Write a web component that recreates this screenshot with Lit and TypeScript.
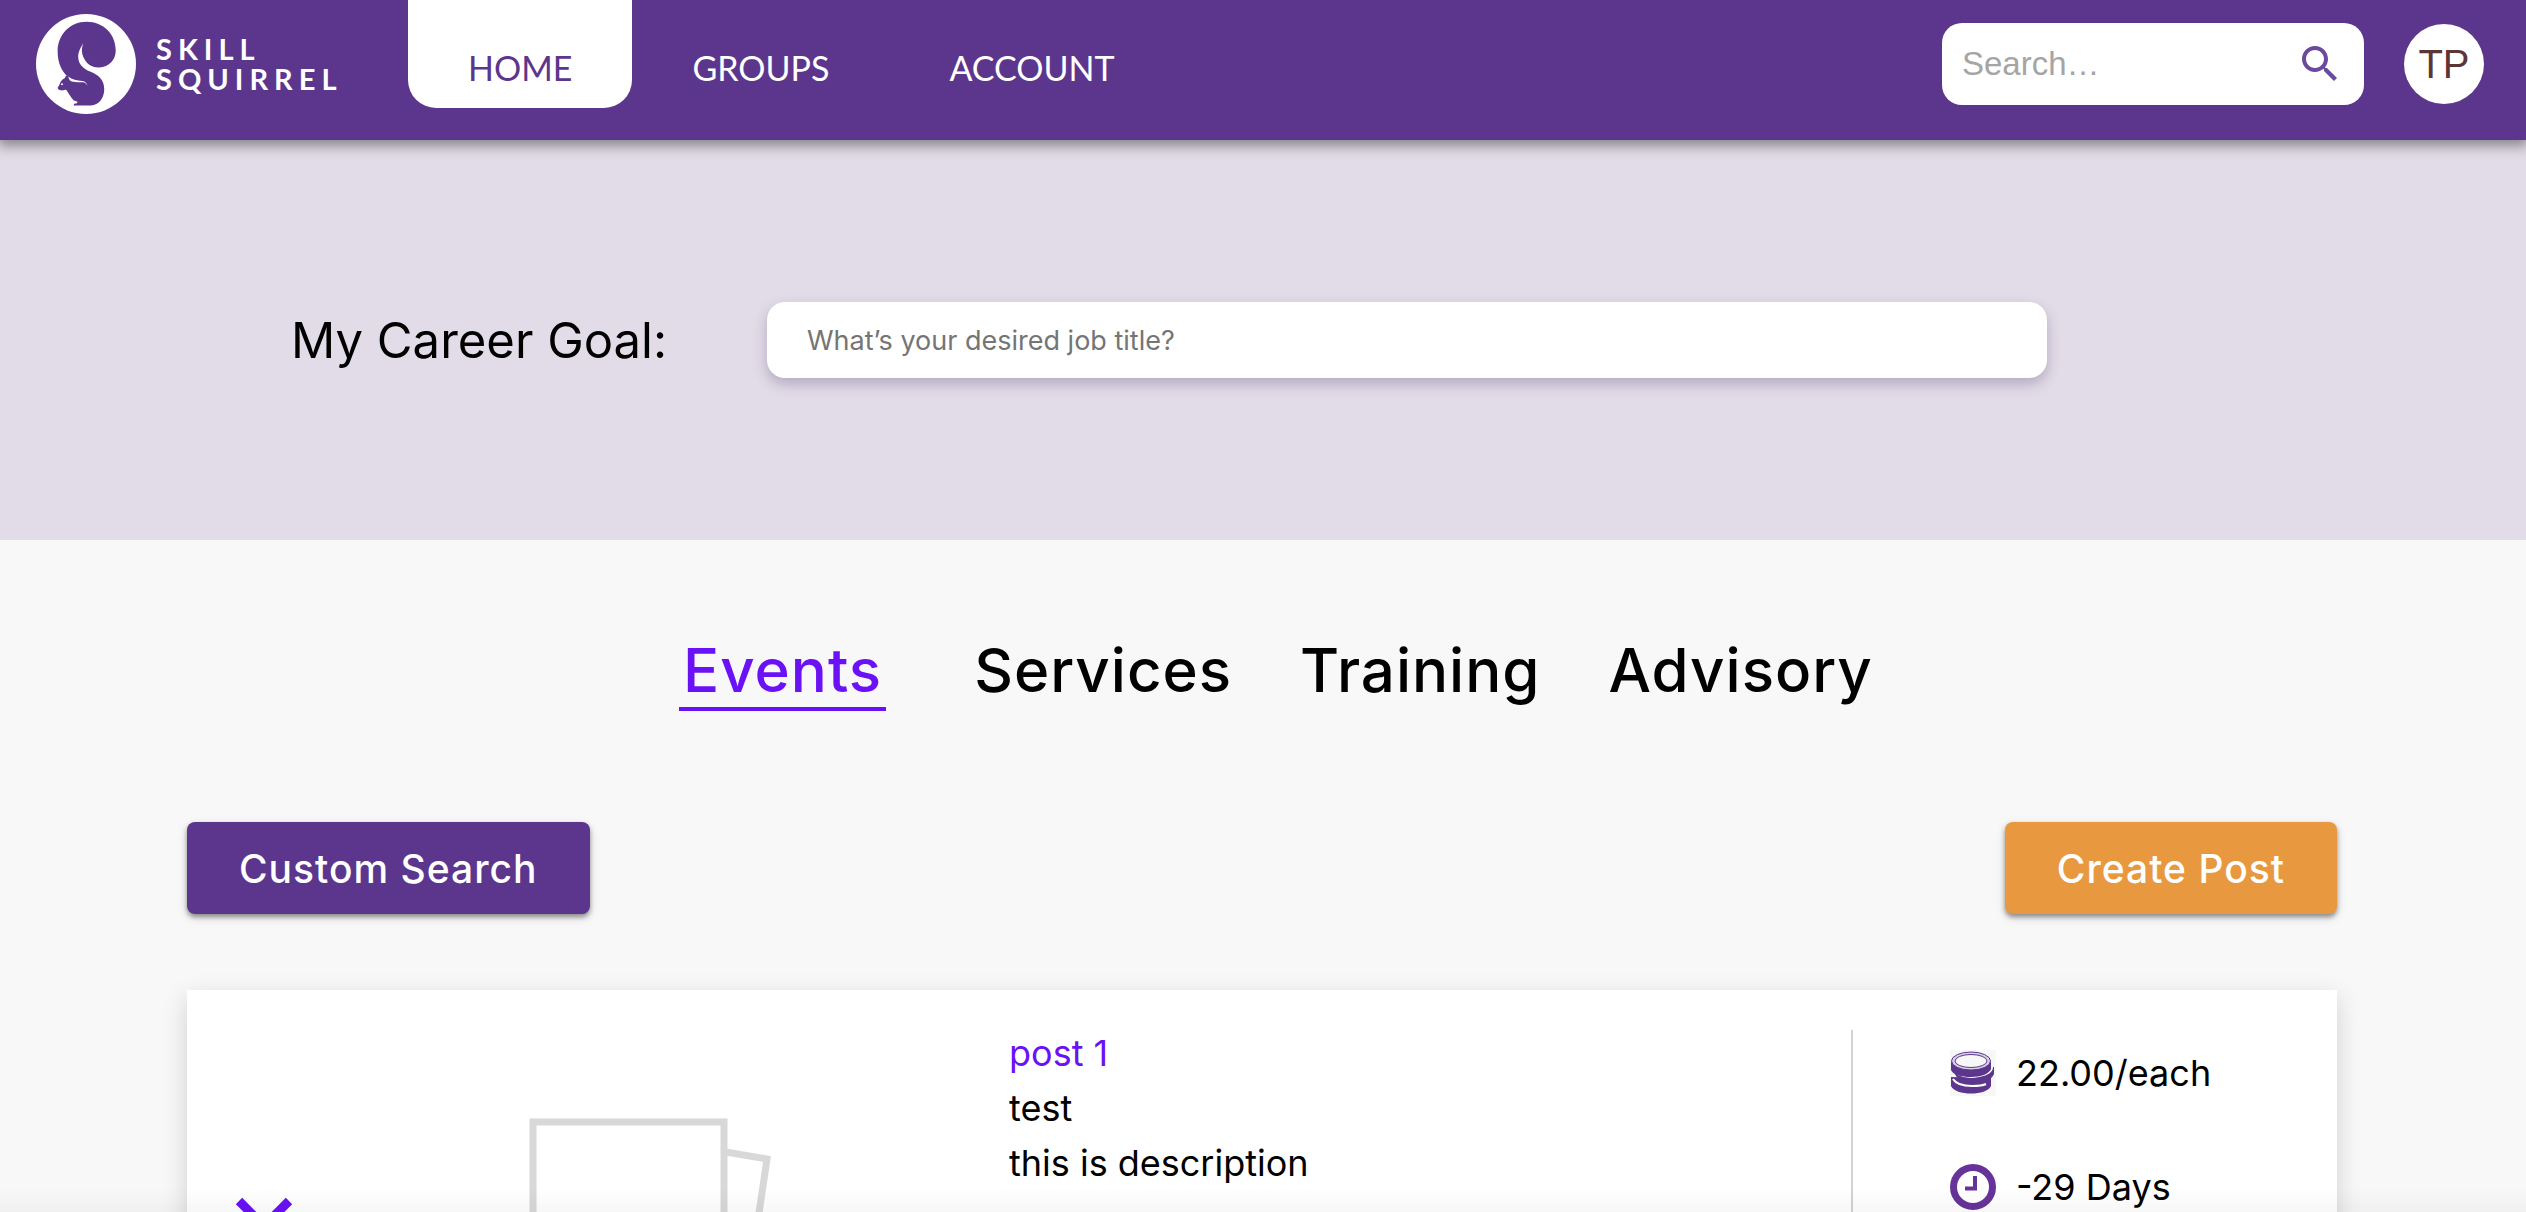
import { LitElement, html, css, svg } from "lit";
import { customElement, property, state } from "lit/decorators.js";
import { classMap } from "lit/directives/class-map.js";

const logoMark = svg`
  <circle cx="166" cy="168" r="148" fill="#fff"></circle>
  <path fill="#5c368d" d="M205 178C235 177 254 155 254 128C254 80 218 43 168 43C118 43 82 82 82 130
    C82 164 94 190 112 205L107 202L103 210C95 213 90 220 87 230L82 238C83 244 90 247 98 246
    C102 246 105 242 108 245C115 256 122 268 130 276L141 280L139 284L131 286L129 291H180
    C205 291 220 268 220 243C220 214 202 200 180 191C158 182 143 168 143 147C143 130 152 117 158 106
    C151 126 153 141 163 156C172 171 187 179 205 178Z"></path>
  <path fill="#fff" d="M113 205C116 211 116 217 124 220C138 223 150 221 158 222C164 224 168 227 170 233
    C170 226 164 219 155 218C139 217 125 214 113 205Z"></path>
  <circle cx="95" cy="228" r="3" fill="#fff"></circle>
`;

@customElement("skill-header")
class SkillHeader extends LitElement {
  @state() private current = "HOME";

  static styles = css`
    :host {
      display: block;
      position: relative;
      z-index: 2;
      flex: none;
    }
    .bar {
      display: flex;
      align-items: flex-start;
      height: 140px;
      padding: 0 42px 0 36px;
      box-sizing: border-box;
      background: #5c368d;
      box-shadow: 0 4px 12px 2px rgba(0, 0, 0, 0.4);
      font-family: Lato, "Liberation Sans", sans-serif;
    }
    .brand {
      display: flex;
      align-items: center;
      gap: 20px;
      width: 372px;
      height: 128px;
      color: #fff;
      text-decoration: none;
    }
    .mark {
      width: 100px;
      height: 100px;
    }
    .word {
      font-size: 29px;
      line-height: 30px;
      font-weight: 700;
      letter-spacing: 6px;
    }
    .nav {
      display: flex;
      flex: 1;
    }
    .link {
      height: 108px;
      padding: 28px 60px 0;
      box-sizing: border-box;
      border-radius: 0 0 28px 28px;
      color: #fff;
      font-size: 34px;
      line-height: 80px;
      text-decoration: none;
    }
    .link.on {
      background: #fff;
      color: #5c368d;
    }
    .search {
      display: flex;
      align-items: center;
      width: 422px;
      height: 82px;
      margin: 23px 40px 0 0;
      padding: 0 20px;
      box-sizing: border-box;
      border-radius: 20px;
      background: #fff;
    }
    .search input {
      flex: 1;
      min-width: 0;
      padding: 0;
      border: 0;
      outline: 0;
      background: none;
      font: 33px "Liberation Sans", sans-serif;
      color: #333;
    }
    .search input::placeholder {
      color: #a5a5a5;
      opacity: 1;
    }
    .go {
      display: flex;
      padding: 0;
      border: 0;
      background: none;
      cursor: pointer;
    }
    .go svg {
      width: 48px;
      height: 48px;
      fill: #6a4a9c;
    }
    .avatar {
      width: 80px;
      height: 80px;
      margin-top: 24px;
      padding: 0;
      border: 0;
      border-radius: 50%;
      background: #fff;
      color: #5d3535;
      font: 40px "Liberation Sans", sans-serif;
    }
  `;

  private pick(e: Event, name: string) {
    e.preventDefault();
    this.current = name;
  }

  render() {
    return html`
      <header class="bar">
        <a class="brand" href="#home">
          <svg class="mark" viewBox="18 20 296 296" aria-hidden="true">${logoMark}</svg>
          <span class="word">SKILL<br />SQUIRREL</span>
        </a>
        <nav class="nav">
          ${["HOME", "GROUPS", "ACCOUNT"].map(
            (n) => html`<a
              class=${classMap({ link: true, on: n === this.current })}
              href="#${n.toLowerCase()}"
              @click=${(e: Event) => this.pick(e, n)}
              >${n}</a
            >`
          )}
        </nav>
        <form class="search" @submit=${(e: Event) => e.preventDefault()}>
          <input type="text" aria-label="Search" placeholder="Search…" />
          <button class="go" aria-label="Search">
            <svg viewBox="0 0 24 24">
              <path d="M15.5 14h-.79l-.28-.27C15.41 12.59 16 11.11 16 9.5 16 5.91 13.09 3 9.5 3S3 5.91 3 9.5 5.91 16 9.5 16c1.61 0 3.09-.59 4.23-1.57l.27.28v.79l5 4.99L20.49 19l-4.99-5zm-6 0C7.01 14 5 11.99 5 9.5S7.01 5 9.5 5 14 7.01 14 9.5 11.99 14 9.5 14z"></path>
            </svg>
          </button>
        </form>
        <button class="avatar">TP</button>
      </header>
    `;
  }
}

interface Post {
  title: string;
  type: string;
  description: string;
  price: string;
  days: string;
}

@customElement("post-card")
class PostCard extends LitElement {
  @property({ attribute: false }) post!: Post;

  static styles = css`
    :host {
      display: block;
    }
    .card {
      display: grid;
      grid-template-columns: 125px 697px minmax(0, 1fr) 486px;
      min-height: 464px;
      padding: 40px 0;
      box-sizing: border-box;
      background: #fff;
      box-shadow: 0 8px 24px rgba(0, 0, 0, 0.16);
      font-size: 36px;
    }
    .vote {
      display: flex;
      align-items: center;
      justify-content: flex-end;
      padding: 0;
      border: 0;
      background: none;
    }
    .vote svg {
      width: 96px;
      height: 96px;
      fill: none;
      stroke: #6a11f5;
      stroke-width: 9;
    }
    .thumb {
      display: flex;
      align-items: flex-start;
      justify-content: center;
      padding: 88px 18px 0 0;
    }
    .thumb svg {
      width: 245px;
      height: 248px;
      fill: #fff;
      stroke: #d8d8d8;
      stroke-width: 7;
    }
    .text {
      line-height: 55px;
    }
    .title {
      display: block;
      margin-top: -4px;
      color: #6a11f5;
      text-decoration: none;
    }
    .line {
      margin: 0;
    }
    .facts {
      display: flex;
      flex-direction: column;
      gap: 68px;
      margin: 0;
      padding: 20px 0 0 97px;
      border-left: 2px solid #d2d2d2;
      list-style: none;
    }
    .fact {
      display: flex;
      align-items: center;
      gap: 20px;
      height: 46px;
    }
    .fact svg {
      width: 46px;
      height: 46px;
    }
  `;

  render() {
    const p = this.post;
    return html`
      <article class="card">
        <button class="vote" aria-label="Expand post">
          <svg viewBox="0 0 96 96"><path d="M23 27l25 25 25-25"></path></svg>
        </button>
        <div class="thumb">
          <svg viewBox="0 0 245 248" aria-hidden="true">
            <path d="M150 26L238 41L210 230L120 214Z"></path>
            <rect x="4" y="4" width="191" height="230"></rect>
          </svg>
        </div>
        <div class="text">
          <a class="title" href="#post">${p.title}</a>
          <p class="line">${p.type}</p>
          <p class="line">${p.description}</p>
        </div>
        <ul class="facts">
          <li class="fact">
            <svg viewBox="0 0 46 46" aria-hidden="true">
              <rect width="46" height="46" fill="#f7f7f7"></rect>
              <path fill="#5c368d" d="M1 27v9c2 5 11 7.500 20 7.500s18-2.500 20-7.500v-8z"></path>
              <path fill="none" stroke="#fff" stroke-width="2" d="M3 29c3 5 10 7 19 7 7 0 12-1 14-2"></path>
              <path fill="#5c368d" d="M4 19c0 9 8 14 20 14s18-4 20-9v-7z"></path>
              <path fill="none" stroke="#fff" stroke-width="2" d="M8 24c6 3 14 3.500 21 2 8-1.500 13-5 13-9"></path>
              <path fill="#5c368d" d="M1 12v8c2 5 10 7 20 7s18-3 20-8v-7z"></path>
              <ellipse cx="21" cy="11" rx="19.500" ry="9" fill="#d9d0e6" stroke="#5c368d"></ellipse>
              <ellipse cx="21" cy="11" rx="16" ry="6.500" fill="#f7f7f7" stroke="#5c368d"></ellipse>
            </svg>
            <span>${p.price}</span>
          </li>
          <li class="fact">
            <svg viewBox="0 0 46 46" fill="none" stroke="#67339b" aria-hidden="true">
              <circle cx="23" cy="23" r="19.500" stroke-width="7"></circle>
              <path stroke-width="4" d="M25 12v12.500H15"></path>
            </svg>
            <span>${p.days}</span>
          </li>
        </ul>
      </article>
    `;
  }
}

@customElement("app-root")
class AppRoot extends LitElement {
  @state() private tab = "Events";

  private posts: Post[] = [
    { title: "post 1", type: "test", description: "this is description", price: "22.00/each", days: "-29 Days" },
  ];

  static styles = css`
    :host {
      display: flex;
      flex-direction: column;
      height: 100vh;
      overflow: hidden;
      background: #f8f8f8;
      color: #000;
      font-family: Inter, "Liberation Sans", sans-serif;
    }
    .scroll {
      flex: 1;
      min-height: 0;
      overflow-y: auto;
      scrollbar-width: none;
    }
    .goal {
      display: grid;
      grid-template-columns: 476px minmax(0, 1280px);
      align-items: center;
      height: 400px;
      padding: 0 291px;
      box-sizing: border-box;
      background: #e2dce8;
    }
    .goal label {
      font-size: 49px;
    }
    .goal input {
      height: 76px;
      padding: 0 40px;
      box-sizing: border-box;
      border: 0;
      outline: 0;
      border-radius: 18px;
      background: #fff;
      box-shadow: 0 6px 14px rgba(60, 40, 90, 0.28);
      font: 27px Inter, "Liberation Sans", sans-serif;
    }
    .goal input::placeholder {
      color: #757575;
      opacity: 1;
    }
    .tabs {
      display: flex;
      justify-content: center;
      gap: 60px;
      padding: 94px 0 111px 30px;
    }
    .tab {
      padding: 0 4px;
      height: 77px;
      border: 0;
      border-bottom: 4px solid transparent;
      background: none;
      color: #000;
      font: 500 60px/73px Inter, "Liberation Sans", sans-serif;
      letter-spacing: 1px;
      cursor: pointer;
    }
    .tab.on {
      margin-right: 24px;
      border-color: #6a11f5;
      color: #6a11f5;
    }
    .actions {
      display: flex;
      justify-content: space-between;
      padding: 0 189px 76px 187px;
    }
    .btn {
      height: 92px;
      padding: 0 52px;
      border: 0;
      border-radius: 8px;
      background: #5c368d;
      color: #fff;
      font: 500 39px Inter, "Liberation Sans", sans-serif;
      letter-spacing: 1px;
      box-shadow: 0 3px 5px rgba(0, 0, 0, 0.4), 0 4px 12px rgba(0, 0, 0, 0.1);
      cursor: pointer;
    }
    .btn.create {
      background: #e8993f;
    }
    .list {
      padding: 0 189px 76px 187px;
    }
    .fade {
      position: fixed;
      inset: auto 0 0 0;
      height: 24px;
      background: linear-gradient(transparent, rgba(0, 0, 0, 0.03));
      pointer-events: none;
    }
  `;

  render() {
    return html`
      <skill-header></skill-header>
      <main class="scroll">
        <section class="goal">
          <label for="goal">My Career Goal:</label>
          <input id="goal" type="text" placeholder="What’s your desired job title?" />
        </section>
        <div class="tabs" role="tablist">
          ${["Events", "Services", "Training", "Advisory"].map(
            (t) => html`<button
              role="tab"
              aria-selected=${t === this.tab}
              class=${classMap({ tab: true, on: t === this.tab })}
              @click=${() => (this.tab = t)}
            >${t}</button>`
          )}
        </div>
        <div class="actions">
          <button class="btn">Custom Search</button>
          <button class="btn create">Create Post</button>
        </div>
        <section class="list">
          ${this.posts.map((p) => html`<post-card .post=${p}></post-card>`)}
        </section>
      </main>
      <div class="fade"></div>
    `;
  }
}
